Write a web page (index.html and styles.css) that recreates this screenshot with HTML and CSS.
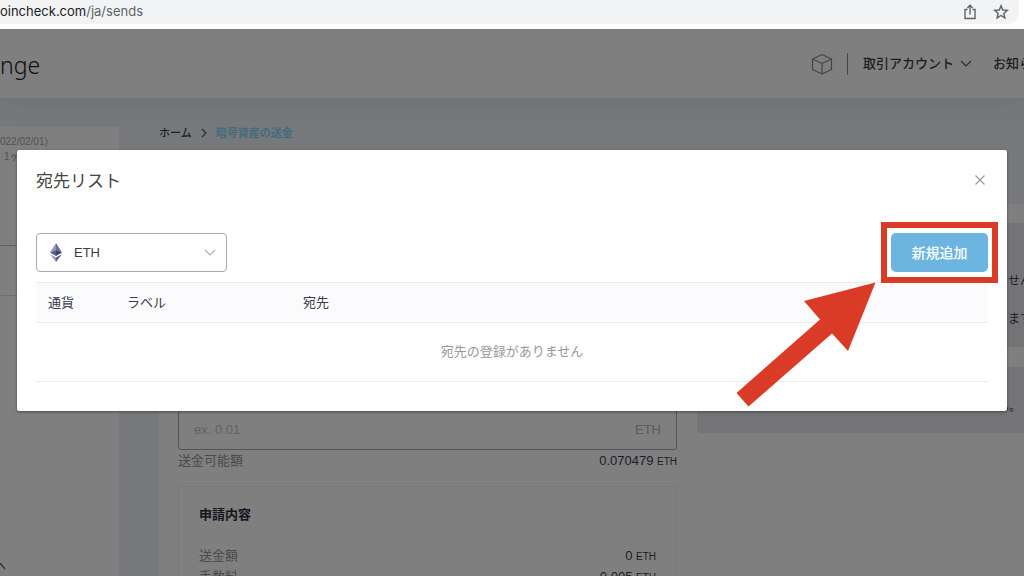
FILE: index.html
```html
<!DOCTYPE html>
<html lang="ja">
<head>
<meta charset="utf-8">
<title>暗号資産の送金</title>
<link rel="stylesheet" href="styles.css">
</head>
<body>
<div class="toolbar">
  <div class="address">
    <p class="url">oincheck.com<span class="url-path">/ja/sends</span></p>
    <button class="tool" type="button" aria-label="共有">
      <svg width="14" height="16" viewBox="0 0 14 16" fill="none" stroke="#5f6368" stroke-width="1.4"><path d="M4.5 5.5H2v9h10v-9H9.500M7 10.500V1.500M4.300 4 7 1.300 9.700 4"/></svg>
    </button>
    <button class="tool" type="button" aria-label="ブックマーク">
      <svg width="16" height="16" viewBox="0 0 16 16" fill="none" stroke="#5f6368" stroke-width="1.4"><path d="M8 1.800 9.700 6l4.600.4-3.500 3 1.100 4.500L8 11.500l-3.900 2.400 1.100-4.500-3.500-3L6.300 6z"/></svg>
    </button>
  </div>
</div>

<div class="site">
  <header class="header">
    <div class="brand">nge</div>
    <nav class="nav">
      <svg class="cube" width="22" height="22" viewBox="0 0 22 22" fill="none" stroke="#88888c" stroke-width="1.200" stroke-linejoin="round"><path d="M11 1.500 20.500 6v10.500L11 21l-9.500-4.500V6zM1.500 6 11 10.500 20.500 6M11 10.500V21"/></svg>
      <span class="divider"></span>
      <button class="account" type="button">取引アカウント
        <svg width="12" height="8" viewBox="0 0 12 8" fill="none" stroke="#55555f" stroke-width="1.200"><path d="m1 1 5 5 5-5"/></svg>
      </button>
      <a class="news" href="#">お知らせ</a>
    </nav>
  </header>

  <div class="layout">
    <aside class="sidebar">
      <p class="period">022/02/01)</p>
      <p class="period indent">1ヶ月</p>
      <div class="side-block"></div>
      <div class="side-row"></div>
      <div class="side-menu"><svg width="6" height="10" viewBox="0 0 6 10" fill="none" stroke="#77777c" stroke-width="1.500"><path d="m0 2 5 6"/></svg></div>
    </aside>

    <main class="main">
      <nav class="crumbs" aria-label="パンくず">
        <a class="crumb" href="#">ホーム</a>
        <svg width="6" height="10" viewBox="0 0 6 10" fill="none" stroke="#55555f" stroke-width="1.200"><path d="m1 1 4 4-4 4"/></svg>
        <a class="crumb current" href="#">暗号資産の送金</a>
      </nav>
      <div class="card">
        <form class="send">
          <label class="amount">
            <input class="amount-input" type="text" placeholder="ex. 0.01" aria-label="送金額">
            <span>ETH</span>
          </label>
          <p class="line available"><span class="key">送金可能額</span><span class="value">0.070479 <small>ETH</small></span></p>
          <section class="summary">
            <h2 class="summary-title">申請内容</h2>
            <p class="line"><span class="key">送金額</span><span class="value">0 <small>ETH</small></span></p>
            <p class="line"><span class="key">手数料</span><span class="value">0.005 <small>ETH</small></span></p>
          </section>
        </form>
        <div class="notices">
          <div class="notice tall"><p>せん</p><p>ます</p></div>
          <div class="notice end"><p>ん。</p></div>
        </div>
      </div>
    </main>
  </div>

  <div class="overlay">
    <section class="dialog" role="dialog" aria-labelledby="dialog-title">
      <div class="dialog-head">
        <h1 class="dialog-title" id="dialog-title">宛先リスト</h1>
        <button class="close" type="button" aria-label="閉じる">
          <svg width="10" height="10" viewBox="0 0 10 10" stroke="#99999d" stroke-width="1.200"><path d="m0.500.5 9 9M9.500.5l-9 9"/></svg>
        </button>
      </div>
      <div class="controls">
        <label class="currency">
          <svg width="12" height="19" viewBox="0 0 12 19"><path fill="#9496b6" d="M6 0 0 9.500 6 7z"/><path fill="#686b98" d="m6 0 6 9.500L6 7z"/><path fill="#585b8a" d="M0 9.500 6 7v6z"/><path fill="#3c3f6c" d="M12 9.500 6 7v6z"/><path fill="#9496b8" d="M0 11.200 6 19v-4.500z"/><path fill="#5d6090" d="M12 11.200 6 19v-4.500z"/></svg>
          <select class="currency-select" aria-label="通貨"><option>ETH</option></select>
          <svg width="12" height="8" viewBox="0 0 12 8" fill="none" stroke="#b0b0b8" stroke-width="1.200"><path d="m1 1 5 5 5-5"/></svg>
        </label>
        <div class="add-wrap">
          <button class="add" type="button">新規追加</button>
          <span class="highlight"></span>
          <svg class="arrow" width="140" height="125" viewBox="0 0 140 125" fill="#da3b26"><path d="M139.500.5 68 19l16 18.500L.5 111l12 13.500L96 51.500 112 69z"/></svg>
        </div>
      </div>
      <table class="list">
        <thead><tr><th class="col-coin">通貨</th><th class="col-label">ラベル</th><th>宛先</th></tr></thead>
        <tbody><tr><td class="empty" colspan="3">宛先の登録がありません</td></tr></tbody>
      </table>
    </section>
  </div>
</div>
</body>
</html>
```
FILE: styles.css
```css
* { box-sizing: border-box; }

body {
  margin: 0;
  height: 100vh;
  display: flex;
  flex-direction: column;
  overflow: hidden;
  background: #fff;
  color: #3c3c4a;
  font-family: "Liberation Sans", "Noto Sans CJK JP", sans-serif;
  font-size: 13px;
  line-height: 20px;
}

p, h1, h2 { margin: 0; font-weight: 400; }
a { color: inherit; text-decoration: none; }
svg { display: block; flex: none; }
button { padding: 0; border: 0; background: none; color: inherit; font: inherit; }

/* Browser bar */
.toolbar { flex: none; padding: 0 5px 5px 0; }
.address {
  display: flex;
  align-items: center;
  gap: 16px;
  height: 24px;
  padding-right: 10px;
  background: #f1f3f4;
  border-radius: 0 0 12px 0;
}
.url {
  flex: 1;
  padding-bottom: 2px;
  color: #202124;
  font-family: Inter, sans-serif;
  font-size: 13px;
}
.url-path { color: #5f6368; }

/* Page */
.site {
  position: relative;
  flex: 1;
  min-height: 0;
  display: flex;
  flex-direction: column;
  overflow: hidden;
  background: #eef0f6;
}
.header {
  position: relative;
  flex: none;
  display: flex;
  align-items: center;
  justify-content: space-between;
  height: 69px;
  background: #fff;
  box-shadow: 0 2px 24px rgba(60, 60, 80, 0.1);
}
.brand {
  font-family: "Noto Sans", sans-serif;
  font-size: 23px;
  font-weight: 300;
  line-height: 32px;
  color: #222;
  padding-top: 2px;
}
.nav { display: flex; align-items: center; }
.divider { width: 1px; height: 22px; margin: 0 15px 0 14px; background: #8c8c90; }
.account { display: flex; align-items: center; gap: 6px; font-weight: 500; }
.news { width: 31px; margin-left: 21px; overflow: hidden; white-space: nowrap; font-weight: 500; }

.layout { flex: 1; display: flex; gap: 40px; }
.sidebar {
  flex: none;
  width: 119px;
  margin-top: 29px;
  padding-top: 7px;
  background: #fff;
  color: #a2a2a8;
}
.period { font-size: 10px; line-height: 15px; }
.indent { padding-left: 4px; }
.side-block { height: 82px; border-bottom: 1px solid #b4c0d4; }
.side-row { height: 50px; border-bottom: 1px solid #e0e0e4; }
.side-menu { padding-top: 265px; }

.main { flex: 1; display: flex; flex-direction: column; }
.crumbs { display: flex; align-items: center; gap: 9px; height: 20px; margin: 25px 0 61px; font-size: 11px; font-weight: 500; }
.current { color: #86d8fa; font-weight: 700; }
.card {
  flex: 1;
  display: grid;
  grid-template-columns: 499fr 327fr;
  gap: 20px;
  padding: 19px 0 0 19px;
  background: #fff;
}
.send { padding-top: 187px; }
.amount {
  display: flex;
  align-items: center;
  height: 40px;
  padding: 0 15px;
  border: 1px solid #a8a8c0;
  border-radius: 3px;
  color: #b8b8be;
}
.amount-input { flex: 1; min-width: 0; padding: 0; border: 0; background: none; font: inherit; outline: 0; }
.amount-input::placeholder { color: #c4c4c8; }
.line { display: flex; justify-content: space-between; }
.key { color: #94949a; }
small { font-size: 10px; }
.available { padding-top: 1px; }
.summary {
  height: 160px;
  margin-top: 14px;
  padding: 18px 20px;
  border: 1px solid #f0f0f4;
  border-radius: 4px;
}
.summary-title { margin-bottom: 21px; color: #2c2c3c; font-size: 13px; font-weight: 700; }

.notices { display: flex; flex-direction: column; gap: 20px; overflow: hidden; }
.notice {
  height: 66px;
  padding: 30px 0 0 calc(100% - 16px);
  overflow: hidden;
  border-radius: 4px 0 0 4px;
  background: #e9e9ef;
  font-size: 12px;
  white-space: nowrap;
}
.tall { display: flex; flex-direction: column; gap: 18px; height: 124px; padding-top: 48px; }
.end { padding-left: calc(100% - 27px); }

/* Dialog */
.overlay { position: absolute; inset: 0; padding: 121px 17px 0; background: rgba(0, 0, 0, 0.5); }
.dialog {
  padding: 20px 19px 29px;
  border-radius: 2px;
  background: #fff;
  box-shadow: 0 1px 3px rgba(0, 0, 0, 0.4);
}
.dialog-head { display: flex; align-items: center; justify-content: space-between; height: 20px; }
.dialog-title { padding-top: 3px; font-size: 17px; color: #444; }
.close { padding: 3px; }
.controls { display: flex; justify-content: space-between; margin: 43px 0 10px; }
.currency {
  display: flex;
  align-items: center;
  width: 191px;
  height: 39px;
  padding: 0 10px 0 13px;
  border: 1px solid #a9a9bd;
  border-radius: 4px;
}
.currency-select {
  flex: 1;
  margin-left: 12px;
  padding: 0;
  border: 0;
  appearance: none;
  background: none;
  color: inherit;
  font: inherit;
}
.add-wrap { position: relative; }
.add {
  width: 97px;
  height: 39px;
  border-radius: 5px;
  background: #6cb5e0;
  color: #fff;
  font-size: 14px;
  font-weight: 500;
}
.highlight { position: absolute; inset: -11px -10px; border: 6px solid #da3b26; pointer-events: none; }
.arrow { position: absolute; top: 49px; right: 112px; pointer-events: none; }

.list { width: 100%; table-layout: fixed; border-collapse: collapse; }
.list th {
  height: 40px;
  padding: 1px 12px 0;
  border-top: 1px solid #ebebee;
  border-bottom: 1px solid #ebebee;
  background: #fbfbfe;
  font-weight: 400;
  text-align: left;
}
.col-coin { width: 79px; }
.col-label { width: 176px; }
.list .empty { height: 59px; padding: 0; border-bottom: 1px solid #ebebee; color: #99999d; text-align: center; }
```
